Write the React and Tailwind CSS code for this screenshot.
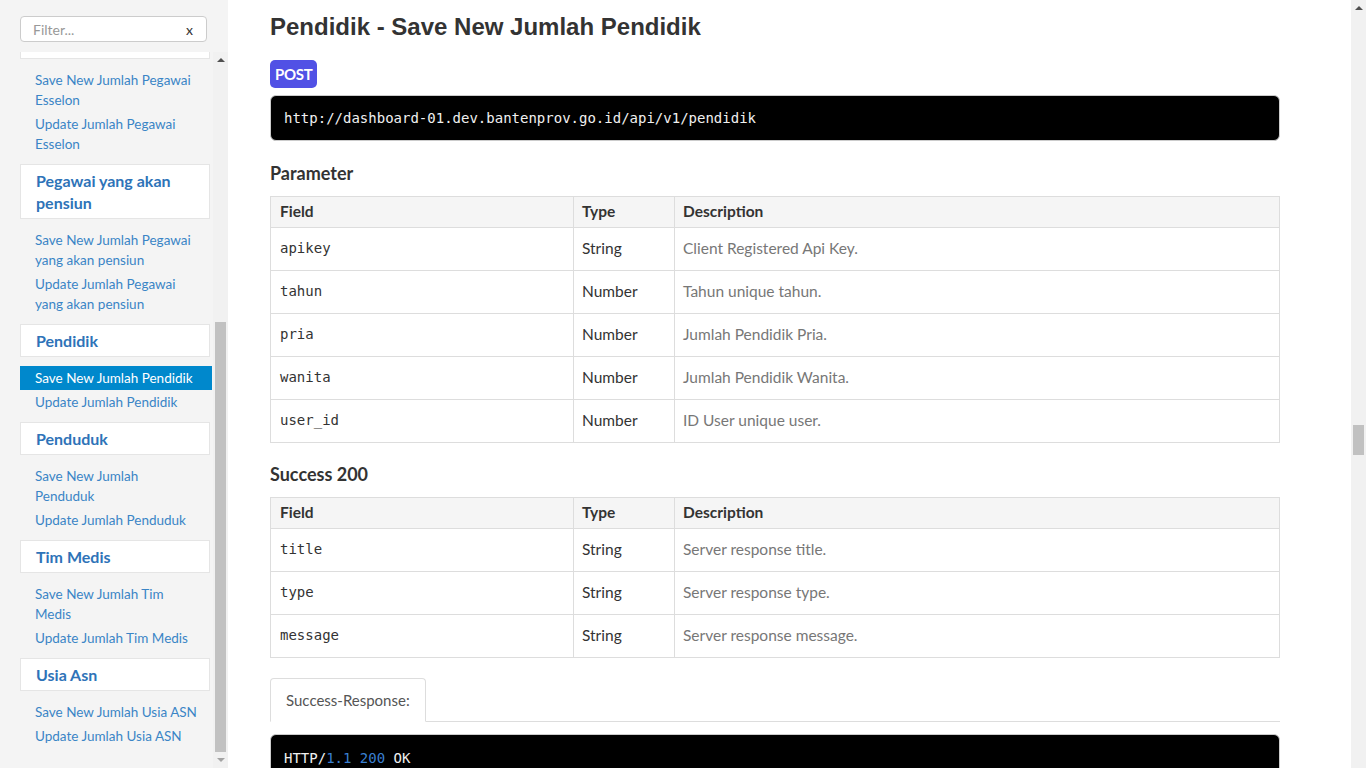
import React from 'react'

const SANS = { fontFamily: 'Lato, "Noto Sans", sans-serif' }
const MONO = { fontFamily: '"DejaVu Sans Mono", "Liberation Mono", monospace' }

// sidebar groups after the partially scrolled-off one
const groups = [
  { title: ['Pegawai yang akan', 'pensiun'], links: [['Save New Jumlah Pegawai', 'yang akan pensiun'], ['Update Jumlah Pegawai', 'yang akan pensiun']] },
  { title: ['Pendidik'], links: [['Save New Jumlah Pendidik'], ['Update Jumlah Pendidik']], active: 0 },
  { title: ['Penduduk'], links: [['Save New Jumlah', 'Penduduk'], ['Update Jumlah Penduduk']] },
  { title: ['Tim Medis'], links: [['Save New Jumlah Tim', 'Medis'], ['Update Jumlah Tim Medis']] },
  { title: ['Usia Asn'], links: [['Save New Jumlah Usia ASN'], ['Update Jumlah Usia ASN']] },
]

const params = [
  ['apikey', 'String', 'Client Registered Api Key.'],
  ['tahun', 'Number', 'Tahun unique tahun.'],
  ['pria', 'Number', 'Jumlah Pendidik Pria.'],
  ['wanita', 'Number', 'Jumlah Pendidik Wanita.'],
  ['user_id', 'Number', 'ID User unique user.'],
]

const success = [
  ['title', 'String', 'Server response title.'],
  ['type', 'String', 'Server response type.'],
  ['message', 'String', 'Server response message.'],
]

function NavLink({ lines, active }) {
  return (
    <div className={`py-[2px] pl-[15px] pr-2 text-[13.5px] leading-[20px] ${active ? 'bg-[#0088cc] text-white' : 'text-[#3a85c6]'}`}>
      {lines.map((l, i) => <div key={i}>{l}</div>)}
    </div>
  )
}

function NavHeader({ lines }) {
  return (
    <div className="mt-[8px] mb-[9px] mr-[2px] bg-white border border-[#e5e5e5] pt-[5px] pb-[4px] pl-[15px] text-[16px] leading-[22px] font-bold text-[#2e73b8]">
      {lines.map((l, i) => <div key={i}>{l}</div>)}
    </div>
  )
}

function Arrow({ up, color }) {
  return (
    <div className="h-[16px] flex items-center justify-center">
      <div className={`w-0 h-0 border-l-[4px] border-r-[4px] border-transparent ${up ? 'border-b-[4px]' : 'border-t-[4px]'} ${color}`} />
    </div>
  )
}

function Sidebar() {
  return (
    <aside className="w-[228px] shrink-0 bg-[#f4f4f4] flex flex-col" style={SANS}>
      <div className="h-[52px] pt-[16px] pl-[20px] pr-[21px]">
        <div className="h-[26px] bg-white border border-[#cccccc] rounded-[4px] flex items-center justify-between pl-[12px] pr-[13px] text-[14px]">
          <span className="text-[#999999]">Filter...</span>
          <span className="text-[#333333]">x</span>
        </div>
      </div>
      <div className="flex flex-1 min-h-0">
        <div className="w-[213px] pl-[20px] pr-[1px] overflow-hidden">
          <div className="h-[7px] mr-[2px] bg-white border border-t-0 border-[#e5e5e5] mb-[9px]" />
          <NavLink lines={['Save New Jumlah Pegawai', 'Esselon']} />
          <NavLink lines={['Update Jumlah Pegawai', 'Esselon']} />
          {groups.map((g, i) => (
            <div key={i}>
              <NavHeader lines={g.title} />
              {g.links.map((l, j) => <NavLink key={j} lines={l} active={g.active === j} />)}
            </div>
          ))}
        </div>
        <div className="w-[15px] bg-[#f1f1f1] flex flex-col">
          <Arrow up color="border-b-[#505050]" />
          <div className="h-[254px]" />
          <div className="mx-[2px] flex-1 bg-[#c1c1c1]" />
          <Arrow color="border-t-[#a3a3a3]" />
        </div>
      </div>
    </aside>
  )
}

function ApiTable({ rows }) {
  return (
    <table className="w-full border-collapse border border-[#dddddd] text-[15.5px]">
      <thead>
        <tr className="bg-[#f5f5f5] h-[31px] text-left">
          <th className="w-[303px] border border-[#dddddd] pl-[9px] font-bold text-[#333333]">Field</th>
          <th className="w-[101px] border border-[#dddddd] pl-[8px] font-bold text-[#333333]">Type</th>
          <th className="border border-[#dddddd] pl-[8px] font-bold text-[#333333]">Description</th>
        </tr>
      </thead>
      <tbody>
        {rows.map(([f, t, d]) => (
          <tr key={f} className="h-[43px]">
            <td className="border border-[#dddddd] pl-[9px] pb-[2px] text-[14px] text-[#333333]" style={MONO}>{f}</td>
            <td className="border border-[#dddddd] pl-[8px] text-[#333333]">{t}</td>
            <td className="border border-[#dddddd] pl-[8px] text-[#777777]">{d}</td>
          </tr>
        ))}
      </tbody>
    </table>
  )
}

function Main() {
  return (
    <main className="flex-1 min-w-0 overflow-hidden bg-white pl-[42px] pr-[71px] text-[#333333]" style={SANS}>
      <h1 className="pt-[12px] text-[24px] leading-[30px] font-bold text-[#333333]" style={{ fontFamily: '"Liberation Sans", Arial, sans-serif' }}>
        Pendidik - Save New Jumlah Pendidik
      </h1>
      <div className="mt-[18px] inline-flex h-[28px] px-[5px] items-center rounded-[5px] bg-[#5151e5] text-white text-[15px] font-bold tracking-[-0.3px]">
        POST
      </div>
      <div className="mt-[7px] h-[46px] flex items-center pl-[13px] bg-black border border-[#cccccc] rounded-[6px] text-[14px] text-[#f0f0f0]" style={MONO}>
        http://dashboard-01.dev.bantenprov.go.id/api/v1/pendidik
      </div>
      <h2 className="mt-[20px] text-[18px] leading-[24px] font-bold text-[#333333]">Parameter</h2>
      <div className="mt-[11px]">
        <ApiTable rows={params} />
      </div>
      <h2 className="mt-[19px] text-[18px] leading-[24px] font-bold text-[#333333]">Success 200</h2>
      <div className="mt-[11px]">
        <ApiTable rows={success} />
      </div>
      <div className="mt-[20px] flex border-b border-[#dddddd]">
        <div className="-mb-px h-[44px] px-[15px] flex items-center bg-white border border-b-white border-[#dddddd] rounded-t-[4px] text-[15px] text-[#555555]">
          Success-Response:
        </div>
      </div>
      <div className="mt-[12px] h-[60px] bg-black rounded-[6px] border border-[#cccccc] pl-[13px] pt-[13px] text-[14px] text-[#f0f0f0]" style={MONO}>
        HTTP/<span className="text-[#3a7fd0]">1.1 200</span> OK
      </div>
    </main>
  )
}

export default function App() {
  return (
    <div className="flex w-[1366px] h-[768px] overflow-hidden bg-white">
      <Sidebar />
      <Main />
      <div className="w-[15px] shrink-0 bg-[#f1f1f1] flex flex-col">
        <Arrow up color="border-b-[#505050]" />
        <div className="h-[409px]" />
        <div className="mx-[2px] h-[30px] bg-[#c1c1c1]" />
      </div>
    </div>
  )
}
